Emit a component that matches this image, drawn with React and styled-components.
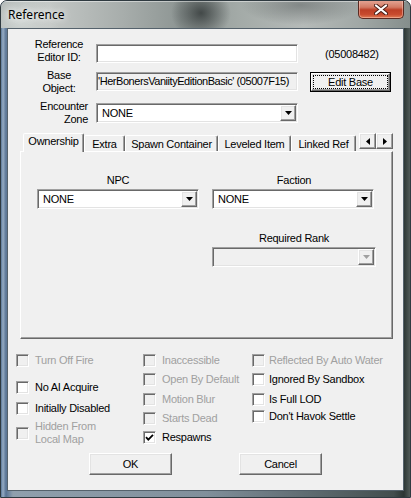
import React from 'react';
import styled, { createGlobalStyle, css } from 'styled-components';

const GlobalStyle = createGlobalStyle`
  html, body {
    margin: 0;
    padding: 0;
    background: #fff;
  }
  body {
    font-family: "Liberation Sans", Arial, sans-serif;
    font-size: 11px;
    letter-spacing: -0.25px;
    color: #000;
  }
  * {
    box-sizing: border-box;
  }
`;

const sunken = css`
  border: 1px solid;
  border-color: #a0a0a0 #fff #fff #a0a0a0;
  box-shadow: inset 1px 1px 0 #696969, inset -1px -1px 0 #e3e3e3;
`;

const raised = css`
  border: 1px solid;
  border-color: #fff #696969 #696969 #fff;
  box-shadow: inset -1px -1px 0 #a0a0a0, inset 1px 1px 0 #e3e3e3;
  background: #f0f0f0;
`;

const Window = styled.div`
  width: 411px;
  height: 498px;
  display: flex;
  flex-direction: column;
  border: 1px solid #2f3a40;
  border-radius: 7px 7px 0 0;
  overflow: hidden;
  background:
    linear-gradient(to right,
      rgba(88, 118, 152, 0.95) 0,
      rgba(150, 172, 196, 0.95) 2px,
      rgba(84, 112, 146, 0.9) 5px,
      rgba(160, 172, 180, 0.5) 12px,
      rgba(130, 138, 138, 0.4) 50%,
      rgba(60, 70, 68, 0.9) 96%,
      rgba(44, 54, 52, 1) 98.5%,
      rgba(80, 90, 88, 1) 100%),
    linear-gradient(to bottom, #b4babb 0, #9aa6ae 80px, #7f93a6 100%);
`;

const TitleBar = styled.div`
  height: 27px;
  flex: none;
  display: flex;
  justify-content: space-between;
  align-items: flex-start;
  padding-left: 7px;
  padding-right: 6px;
  background:
    radial-gradient(ellipse 30px 26px at 200px 12px, rgba(52, 58, 58, 0.85), rgba(52, 58, 58, 0) 100%),
    radial-gradient(ellipse 60px 20px at 300px 4px, rgba(80, 86, 86, 0.5), rgba(80, 86, 86, 0) 100%),
    radial-gradient(ellipse 40px 30px at 20px 20px, rgba(215, 220, 218, 0.8), rgba(215, 220, 218, 0) 100%),
    linear-gradient(to right, #aeb4b2 0, #c3c7c5 12%, #a7adab 30%, #8d9593 44%, #a3aaa7 58%, #b5bab8 74%, #a0a7a5 88%, #858e8c 100%);
  box-shadow: inset 0 1px 0 rgba(255, 255, 255, 0.45);
`;

const Caption = styled.div`
  margin-top: 6px;
  font-family: "Noto Sans", "Open Sans", sans-serif;
  font-size: 12px;
  letter-spacing: 0;
  line-height: 16px;
  color: #000;
  text-shadow: 0 0 6px rgba(255, 255, 255, 0.9), 0 0 10px rgba(255, 255, 255, 0.7);
`;

const CloseButton = styled.div`
  width: 46px;
  height: 19px;
  margin-top: -1px;
  display: flex;
  align-items: center;
  justify-content: center;
  border: 1px solid #5a2a22;
  border-top: none;
  border-radius: 0 0 5px 5px;
  background: linear-gradient(to bottom, #e6a898 0, #d27a64 40%, #bd3f26 55%, #c84a2e 80%, #e07c54 100%);
  box-shadow: inset 0 0 0 1px rgba(255, 210, 200, 0.45);
`;

const Client = styled.div`
  flex: 1;
  margin: 0 6px 6px 6px;
  border: 1px solid #55626c;
  background: #f0f0f0;
  display: flex;
  flex-direction: column;
`;

const FieldRow = styled.div`
  display: flex;
  align-items: center;
  height: ${p => p.$h}px;
  margin-top: ${p => p.$top}px;
  padding-left: 22px;
`;

const FieldLabel = styled.div`
  width: 58px;
  margin-right: 8px;
  flex: none;
  text-align: ${p => p.$align || 'center'};
  line-height: 13px;
  position: relative;
  top: ${p => p.$lift || 0}px;
`;

const TextBox = styled.div`
  width: 202px;
  height: 19px;
  flex: none;
  ${sunken};
  background: ${p => (p.$readOnly ? '#f0f0f0' : '#fff')};
  padding: 0 1px;
  line-height: 17px;
  white-space: nowrap;
  overflow: hidden;
  letter-spacing: ${p => (p.$tight ? '-0.45px' : 'inherit')};
`;

const FormId = styled.div`
  margin-left: 27px;
`;

const DefaultButton = styled.div`
  width: 81px;
  height: 20px;
  margin-left: 12px;
  border: 1px solid #000;
  display: flex;
`;

const ButtonFace = styled.div`
  flex: 1;
  ${raised};
  padding: 1px;
  display: flex;
`;

const FocusRing = styled.div`
  flex: 1;
  border: 1px dotted #000;
  display: flex;
  align-items: center;
  justify-content: center;
  line-height: 12px;
`;

const Combo = styled.div`
  width: ${p => p.$w}px;
  height: 20px;
  flex: none;
  display: flex;
  padding: 1px;
  ${sunken};
  background: ${p => (p.$disabled ? '#f0f0f0' : '#fff')};
`;

const ComboValue = styled.div`
  flex: 1;
  padding-left: 4px;
  line-height: 16px;
`;

const DropButton = styled.div`
  width: 16px;
  flex: none;
  ${raised};
  display: flex;
  align-items: center;
  justify-content: center;
`;

const TabArea = styled.div`
  margin: 10px 0 0 12px;
  width: 373px;
`;

const TabStrip = styled.div`
  display: flex;
  height: 18px;
  position: relative;
  z-index: 1;
`;

const TabList = styled.div`
  flex: 1;
  display: flex;
  align-items: flex-start;
  height: 19px;
  padding-left: 3px;
  overflow: hidden;
`;

const Tab = styled.div`
  flex: none;
  width: ${p => p.$w}px;
  height: ${p => (p.$active ? 19 : 16)}px;
  margin-top: ${p => (p.$active ? 0 : 2)}px;
  padding-top: ${p => (p.$active ? 1 : 2)}px;
  background: #f0f0f0;
  border: 1px solid;
  border-bottom: none;
  border-color: #fff #696969 transparent #fff;
  box-shadow: inset -1px 0 0 #a0a0a0;
  border-radius: 2px 2px 0 0;
  text-align: center;
  line-height: 13px;
  white-space: nowrap;
  overflow: hidden;
  position: relative;
  z-index: ${p => (p.$active ? 2 : 1)};
`;

const ScrollPair = styled.div`
  display: flex;
  margin-left: 2px;
  flex: none;
`;

const ScrollButton = styled.div`
  width: 17px;
  height: 16px;
  ${raised};
  display: flex;
  align-items: center;
  justify-content: center;
`;

const Panel = styled.div`
  height: 188px;
  border: 1px solid;
  border-color: #fff #696969 #696969 #fff;
  box-shadow: inset -1px -1px 0 #a0a0a0;
  display: grid;
  grid-template-columns: 162px 164px;
  grid-template-rows: auto auto;
  column-gap: 13px;
  row-gap: 23px;
  align-content: start;
  padding: 22px 0 0 16px;
`;

const PanelField = styled.div`
  display: flex;
  flex-direction: column;
  grid-column: ${p => p.$col || 'auto'};
`;

const PanelLabel = styled.div`
  text-align: center;
  line-height: 13px;
  margin-bottom: 2px;
`;

const CheckGrid = styled.div`
  display: grid;
  grid-template-columns: 127px 109px 1fr;
  padding-left: 8px;
  margin-top: 15px;
  align-items: start;
`;

const CheckColumn = styled.div`
  display: flex;
  flex-direction: column;
`;

const CheckRow = styled.div`
  display: flex;
  align-items: center;
  gap: ${p => p.$gap}px;
  margin-top: ${p => p.$top || 0}px;
  color: ${p => (p.$disabled ? '#a0a0a0' : '#000')};
  line-height: 13px;
  white-space: nowrap;
`;

const Box = styled.div`
  width: 13px;
  height: 13px;
  flex: none;
  ${sunken};
  background: ${p => (p.$disabled ? '#f0f0f0' : '#fff')};
  display: flex;
  align-items: center;
  justify-content: center;
`;

const ButtonRow = styled.div`
  display: flex;
  gap: 67px;
  padding-left: 81px;
  margin-top: 7px;
`;

const PushButton = styled.div`
  width: 83px;
  height: 22px;
  ${raised};
  text-align: center;
  line-height: 20px;
`;

const DownArrow = ({ color = '#000' }) => (
  <svg width="7" height="4" viewBox="0 0 7 4">
    <path d="M0 0h7L3.5 4z" fill={color} />
  </svg>
);

const SideArrow = ({ dir }) => (
  <svg width="4" height="7" viewBox="0 0 4 7">
    <path d={dir === 'left' ? 'M4 0v7L0 3.5z' : 'M0 0v7L4 3.5z'} fill="#000" />
  </svg>
);

const CloseGlyph = () => (
  <svg width="14" height="11" viewBox="0 0 14 11">
    <path
      d="M2 1.5l10 8M12 1.5l-10 8"
      stroke="#4a1e16"
      strokeWidth="4"
      strokeLinecap="round"
    />
    <path
      d="M2 1.5l10 8M12 1.5l-10 8"
      stroke="#fff"
      strokeWidth="2.2"
      strokeLinecap="round"
    />
  </svg>
);

const Tick = () => (
  <svg width="9" height="9" viewBox="0 0 9 9">
    <path d="M1 4.2L3.3 6.6L8 1.8" stroke="#000" strokeWidth="1.8" fill="none" />
  </svg>
);

const Select = ({ w, value, disabled }) => (
  <Combo $w={w} $disabled={disabled}>
    <ComboValue>{value}</ComboValue>
    <DropButton>
      <DownArrow color={disabled ? '#a0a0a0' : '#000'} />
    </DropButton>
  </Combo>
);

const Check = ({ label, disabled, checked, top, gap = 6 }) => (
  <CheckRow $disabled={disabled} $top={top} $gap={gap}>
    <Box $disabled={disabled}>{checked && <Tick />}</Box>
    <span>{label}</span>
  </CheckRow>
);

const tabs = [
  { name: 'Ownership', w: 61 },
  { name: 'Extra', w: 41 },
  { name: 'Spawn Container', w: 93 },
  { name: 'Leveled Item', w: 73 },
  { name: 'Linked Ref', w: 65 },
];

const columns = [
  [
    { label: 'Turn Off Fire', disabled: true },
    { label: 'No AI Acquire', top: 14 },
    { label: 'Initially Disabled', top: 8 },
    { label: <>Hidden From<br />Local Map</>, disabled: true, top: 5 },
  ],
  [
    { label: 'Inaccessible', disabled: true },
    { label: 'Open By Default', disabled: true, top: 6 },
    { label: 'Motion Blur', disabled: true, top: 7 },
    { label: 'Starts Dead', disabled: true, top: 6 },
    { label: 'Respawns', checked: true, top: 6 },
  ],
  [
    { label: 'Reflected By Auto Water', disabled: true, gap: 4 },
    { label: 'Ignored By Sandbox', top: 6, gap: 4 },
    { label: 'Is Full LOD', top: 7, gap: 4 },
    { label: "Don't Havok Settle", top: 4, gap: 4 },
  ],
];

const App = () => (
  <>
    <GlobalStyle />
    <Window>
      <TitleBar>
        <Caption>Reference</Caption>
        <CloseButton>
          <CloseGlyph />
        </CloseButton>
      </TitleBar>
      <Client>
        <FieldRow $h={19} $top={15}>
          <FieldLabel $lift={-3}>Reference<br />Editor ID:</FieldLabel>
          <TextBox />
          <FormId>(05008482)</FormId>
        </FieldRow>
        <FieldRow $h={19} $top={9}>
          <FieldLabel>Base<br />Object:</FieldLabel>
          <TextBox $readOnly $tight>'HerBonersVaniityEditionBasic' (05007F15)</TextBox>
          <DefaultButton>
            <ButtonFace>
              <FocusRing>Edit Base</FocusRing>
            </ButtonFace>
          </DefaultButton>
        </FieldRow>
        <FieldRow $h={20} $top={12}>
          <FieldLabel $align="right">Encounter<br />Zone</FieldLabel>
          <Select w={202} value="NONE" />
        </FieldRow>

        <TabArea>
          <TabStrip>
            <TabList>
              {tabs.map((t, i) => (
                <Tab key={t.name} $w={t.w} $active={i === 0}>{t.name}</Tab>
              ))}
            </TabList>
            <ScrollPair>
              <ScrollButton><SideArrow dir="left" /></ScrollButton>
              <ScrollButton><SideArrow dir="right" /></ScrollButton>
            </ScrollPair>
          </TabStrip>
          <Panel>
            <PanelField>
              <PanelLabel>NPC</PanelLabel>
              <Select w={162} value="NONE" />
            </PanelField>
            <PanelField>
              <PanelLabel>Faction</PanelLabel>
              <Select w={162} value="NONE" />
            </PanelField>
            <PanelField $col={2}>
              <PanelLabel>Required Rank</PanelLabel>
              <Select w={164} value="" disabled />
            </PanelField>
          </Panel>
        </TabArea>

        <CheckGrid>
          {columns.map((col, ci) => (
            <CheckColumn key={ci}>
              {col.map((c, ri) => (
                <Check key={ri} {...c} />
              ))}
            </CheckColumn>
          ))}
        </CheckGrid>

        <ButtonRow>
          <PushButton>OK</PushButton>
          <PushButton>Cancel</PushButton>
        </ButtonRow>
      </Client>
    </Window>
  </>
);

export default App;
